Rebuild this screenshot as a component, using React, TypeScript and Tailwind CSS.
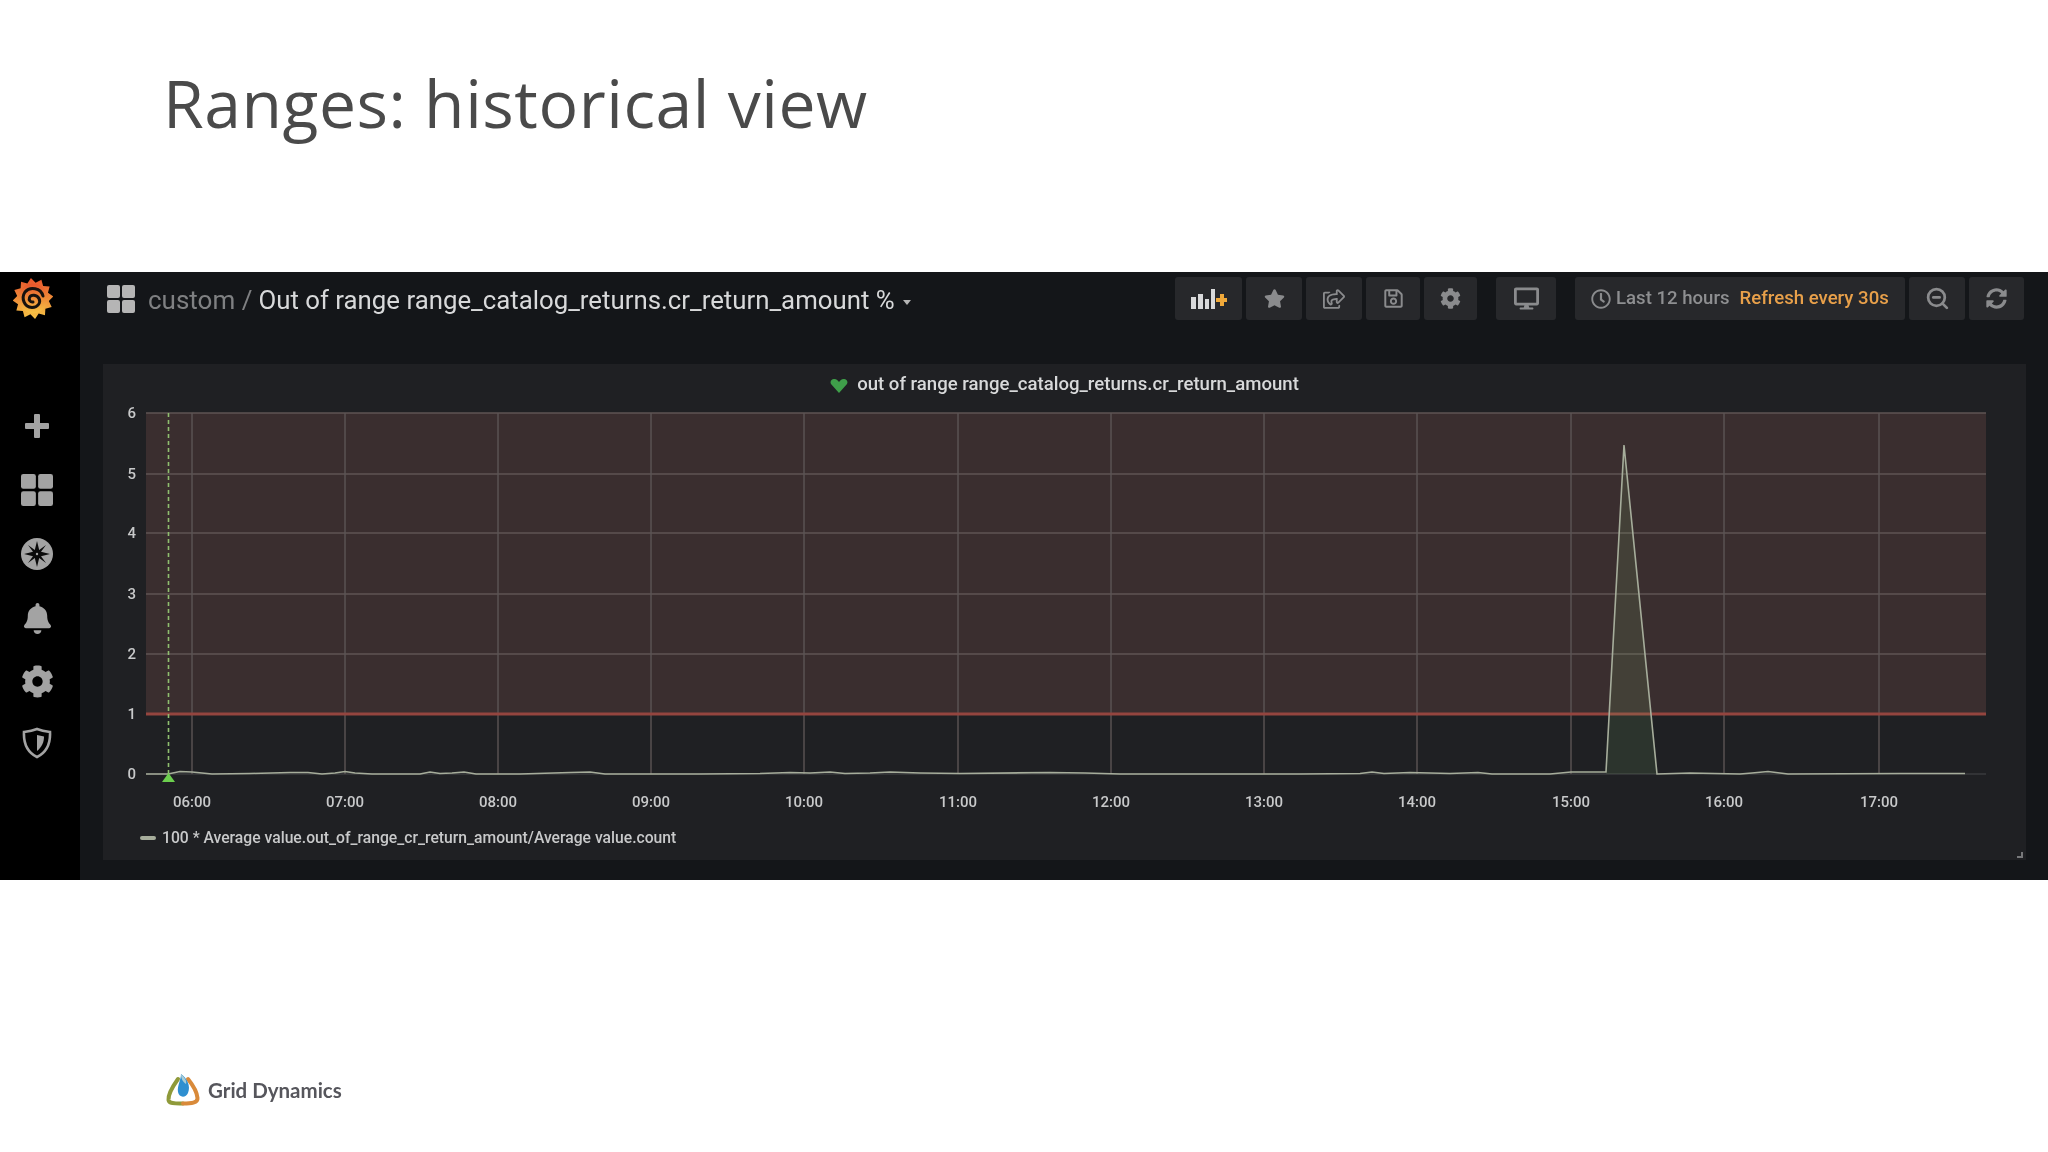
import React from 'react';
import { FaBell, FaCog, FaDesktop, FaRegClock, FaRegSave, FaStar, FaSyncAlt, FaRegShareSquare } from 'react-icons/fa';
import { ZoomOut } from 'lucide-react';

const yTicks = [
  { label: '6', y: 413 },
  { label: '5', y: 474 },
  { label: '4', y: 533 },
  { label: '3', y: 594 },
  { label: '2', y: 654 },
];

const xTicks = [
  { label: '06:00', x: 192 },
  { label: '07:00', x: 345 },
  { label: '08:00', x: 498 },
  { label: '09:00', x: 651 },
  { label: '10:00', x: 804 },
  { label: '11:00', x: 958 },
  { label: '12:00', x: 1111 },
  { label: '13:00', x: 1264 },
  { label: '14:00', x: 1417 },
  { label: '15:00', x: 1571 },
  { label: '16:00', x: 1724 },
  { label: '17:00', x: 1879 },
];

// series points, page coordinates
const series: [number, number][] = [
  [146, 774], [168, 774], [180, 771.5], [192, 772], [212, 774], [250, 773.5], [290, 772.5], [308, 772.5], [322, 774],
  [335, 773], [345, 771.5], [355, 773], [372, 774], [420, 774], [430, 772], [440, 773.5], [452, 773], [464, 772],
  [476, 774], [520, 774], [570, 772.5], [590, 772], [605, 774], [650, 774], [700, 774], [760, 773.5], [790, 772.5],
  [810, 773], [830, 772], [845, 773.5], [870, 773], [890, 772], [920, 773], [960, 773.5], [1050, 772.5], [1085, 773],
  [1120, 774], [1300, 774], [1360, 773.5], [1372, 772], [1384, 773.5], [1410, 772.5], [1430, 773], [1450, 773.5], [1478, 772.5],
  [1492, 774], [1550, 774], [1571, 772], [1606, 772], [1624, 445], [1657, 774], [1690, 773], [1740, 774], [1752, 773],
  [1768, 771.5], [1788, 774], [1900, 773.5], [1965, 773.5],
];

const spikeArea = '1606,774 1606,772 1624,445 1657,774';

const GrafanaLogo = () => {
  const spikes = Array.from({ length: 24 }, (_, i) => {
    const r = i % 2 === 0 ? 20.5 : 16;
    const a = (i * Math.PI) / 12 - 0.1;
    return `${20 + r * Math.cos(a)},${21.5 + r * Math.sin(a)}`;
  }).join(' ');
  return (
    <svg width="40" height="43" viewBox="0 0 40 43">
      <defs>
        <linearGradient id="graf" x1="0" y1="0" x2="0" y2="1">
          <stop offset="0" stopColor="#e8542c" />
          <stop offset="1" stopColor="#f6c445" />
        </linearGradient>
      </defs>
      <polygon points={spikes} fill="url(#graf)" />
      <circle cx="20" cy="21.5" r="15" fill="url(#graf)" />
      <path
        d="M30 19 C28 11 17 9 12 15 C8 21 11 30 19 30.500 C25 30.500 28 25.500 26 21.500 C24 17.500 18 17 16.500 20.500 C15.500 23 17.500 25.500 20 25"
        fill="none"
        stroke="#17120f"
        strokeWidth="3"
        strokeLinecap="round"
      />
    </svg>
  );
};

const GridIcon = ({ size, color }: { size: number; color: string }) => (
  <svg width={size} height={size} viewBox="0 0 28 28" fill={color}>
    <rect x="0" y="0" width="13" height="13" rx="2" />
    <rect x="15" y="0" width="13" height="13" rx="2" />
    <rect x="0" y="15" width="13" height="13" rx="2" />
    <rect x="15" y="15" width="13" height="13" rx="2" />
  </svg>
);

const PlusIcon = () => (
  <svg width="24" height="24" viewBox="0 0 24 24" fill="#a3a3a3">
    <rect x="9" y="0" width="6" height="24" rx="1" />
    <rect x="0" y="9" width="24" height="6" rx="1" />
  </svg>
);

const CompassIcon = () => (
  <svg width="32" height="32" viewBox="0 0 32 32">
    <circle cx="16" cy="16" r="16" fill="#a3a3a3" />
    <path d="M16 3 L18.200 12 L25 7 L20 13.800 L29 16 L20 18.200 L25 25 L18.200 20 L16 29 L13.800 20 L7 25 L12 18.200 L3 16 L12 13.800 L7 7 L13.800 12 Z" fill="#0b0b0b" />
    <circle cx="16" cy="16" r="1.2" fill="#a3a3a3" />
  </svg>
);

const ShieldIcon = () => (
  <svg width="30" height="32" viewBox="0 0 30 32">
    <path d="M15 2 C10 4 6 4.500 2 5 C1.500 15 5 25 15 30 C25 25 28.500 15 28 5 C24 4.500 20 4 15 2 Z" fill="none" stroke="#a3a3a3" strokeWidth="2.6" />
    <path d="M15 8 L22 9.500 C22 15 20 20 15 24 Z" fill="#a3a3a3" />
  </svg>
);

const AddPanelIcon = () => (
  <svg width="36" height="22" viewBox="0 0 36 22">
    <rect x="0" y="9" width="5" height="12" fill="#d8d9da" />
    <rect x="7" y="6" width="5" height="15" fill="#d8d9da" />
    <rect x="14" y="11" width="4" height="10" fill="#d8d9da" />
    <rect x="20" y="1" width="4" height="20" fill="#d8d9da" />
    <path d="M29 6 h4 v4 h3 v4 h-3 v4 h-4 v-4 h-4 v-4 h4 Z" fill="#f0a93a" />
  </svg>
);

const navBtn = 'flex h-[43px] items-center justify-center rounded-[3px] bg-[#27282b] text-[#8a8b8d]';

const Header = () => (
  <div className="flex h-[92px] items-start justify-between pl-[27px] pr-[24px] pt-[5px]">
    <div className="flex h-[43px] items-center">
      <GridIcon size={28} color="#b5b5b5" />
      <span className="ml-[13px] mt-[3px] text-[26px] text-[#7f8082]">custom /</span>
      <span className="ml-[6px] mt-[3px] text-[25.8px] text-[#d8d9da]">Out of range range_catalog_returns.cr_return_amount %</span>
      <span className="ml-[8px] mt-[7px] h-0 w-0 border-x-[4px] border-t-[5px] border-x-transparent border-t-[#b5b5b5]" />
    </div>
    <div className="flex items-start">
      <div className="flex gap-1">
        <div className={`${navBtn} w-[67px]`}><AddPanelIcon /></div>
        <div className={`${navBtn} w-[56px]`}><FaStar size={21} /></div>
        <div className={`${navBtn} w-[56px]`}><FaRegShareSquare size={22} /></div>
        <div className={`${navBtn} w-[54px]`}><FaRegSave size={21} /></div>
        <div className={`${navBtn} w-[53px]`}><FaCog size={21} /></div>
      </div>
      <div className={`${navBtn} ml-[19px] w-[60px]`}><FaDesktop size={25} /></div>
      <div className="ml-[19px] flex gap-1">
        <div className={`${navBtn} w-[330px] justify-start pl-4 text-[18.6px] font-medium`}>
          <FaRegClock size={20} />
          <span className="ml-[5px] text-[#8e8f91]">Last 12 hours</span>
          <span className="ml-[10px] text-[#e8a04a]">Refresh every 30s</span>
        </div>
        <div className={`${navBtn} w-[56px]`}><ZoomOut size={25} strokeWidth={2.6} /></div>
        <div className={`${navBtn} w-[55px]`}><FaSyncAlt size={21} /></div>
      </div>
    </div>
  </div>
);

const Chart = () => (
  <svg className="block" width="1923" height="420" viewBox="103 405 1923 420" style={{ fontFamily: 'Roboto, sans-serif' }}>
    <rect x="146" y="413" width="1840" height="301" fill="#3a2e2f" />
    {yTicks.map((t) => (
      <line key={t.label} x1="146" x2="1986" y1={t.y} y2={t.y} stroke="#5f5555" strokeWidth="1.4" />
    ))}
    <line x1="146" x2="1986" y1="774" y2="774" stroke="#46474a" />
    {xTicks.map((t) => (
      <line key={t.label} x1={t.x} x2={t.x} y1="413" y2="774" stroke="#5c5555" strokeWidth="1.4" />
    ))}
    <rect x="146" y="712.500" width="1840" height="3" fill="#94453f" />
    <polygon points={spikeArea} fill="#7eb26d" fillOpacity="0.14" />
    <polyline points={series.map((p) => p.join(',')).join(' ')} fill="none" stroke="#a6ad9b" strokeWidth="1.6" />
    <line x1="168.500" x2="168.500" y1="413" y2="776" stroke="#8fbf6f" strokeWidth="1.6" strokeDasharray="4 3" />
    <polygon points="168.500,773 175,782 162,782" fill="#6ccf4e" />
    {yTicks.map((t) => (
      <text key={t.label} x="136" y={t.y + 5} textAnchor="end" fontSize="15" fontWeight="500" fill="#c8c9ca">{t.label}</text>
    ))}
    <text x="136" y="719" textAnchor="end" fontSize="15" fontWeight="500" fill="#c8c9ca">1</text>
    <text x="136" y="779" textAnchor="end" fontSize="15" fontWeight="500" fill="#c8c9ca">0</text>
    {xTicks.map((t) => (
      <text key={t.label} x={t.x} y="807" textAnchor="middle" fontSize="15" fontWeight="500" fill="#c8c9ca">{t.label}</text>
    ))}
  </svg>
);

const Panel = () => (
  <div className="relative ml-[23px] mr-[22px] h-[496px] bg-[#1f2023]">
    <div className="flex h-[39px] items-center justify-center pt-[2px] text-[18.6px] font-medium text-[#d8d9da]">
      <svg width="18" height="16" viewBox="0 0 18 16" className="mr-[9px] mt-[3px]">
        <path d="M9 15 L1 6 C-0.500 3 2 0.500 4.500 1 C6.500 1 8 2.500 9 4 C10 2.500 11.500 1 13.500 1 C16 0.500 18.500 3 17 6 Z" fill="#3f9f4a" />
      </svg>
      out of range range_catalog_returns.cr_return_amount
    </div>
    <div className="h-[2px]" />
    <Chart />
    <div className="flex h-[25px] items-center pl-[37px] text-[15.7px] font-medium text-[#c8c9ca]">
      <span className="h-[4px] w-[16px] rounded-sm bg-[#a6ad9b]" />
      <span className="ml-[6px]">100 * Average value.out_of_range_cr_return_amount/Average value.count</span>
    </div>
    <span className="absolute bottom-[2px] right-[3px] h-[6px] w-[6px] border-b-2 border-r-2 border-[#77787a]" />
  </div>
);

const Sidebar = () => (
  <div className="flex w-20 shrink-0 flex-col items-center bg-black pr-[6px] pt-[5px]">
    <div className="mr-[8px] h-[43px]"><GrafanaLogo /></div>
    <div className="mt-[74px] flex flex-col items-center text-[#a3a3a3]">
      <div className="flex h-16 w-full items-center justify-center"><PlusIcon /></div>
      <div className="flex h-16 w-full items-center justify-center"><GridIcon size={32} color="#a3a3a3" /></div>
      <div className="flex h-16 w-full items-center justify-center"><CompassIcon /></div>
      <div className="flex h-16 w-full items-center justify-center"><FaBell size={31} /></div>
      <div className="flex h-[63px] w-full items-center justify-center"><FaCog size={33} /></div>
      <div className="-mt-[2px] flex h-16 w-full items-center justify-center"><ShieldIcon /></div>
    </div>
  </div>
);

const GridDynamicsLogo = () => (
  <svg width="36" height="36" viewBox="0 0 36 36" fill="none">
    <path d="M13 7 C8 14 3 23 3.500 28 C4 32 11 31.500 18 31.500" stroke="#8f9a3a" strokeWidth="4" strokeLinecap="round" />
    <path d="M18 31.500 C26 31.500 33 31 32.500 26 C32 20 27 12 23 7" stroke="#d98a3a" strokeWidth="4" strokeLinecap="round" />
    <path d="M16 2 C22 6 26 14 23 21 C21 26 14 26 13 20 C12 14 16 8 16 2 Z" fill="#2f8fd0" />
    <path d="M16 2 C20 6 22 9 21 12 C18 10 16 7 16 2 Z" fill="#a9cdd6" />
  </svg>
);

export default function App() {
  return (
    <div className="h-[1152px] w-[2048px] overflow-hidden bg-white" style={{ fontFamily: 'Roboto, sans-serif' }}>
      <div className="h-[272px] pl-[163px] pt-[58px]">
        <h1 className="text-[66px] font-medium leading-[88px] tracking-[0.55px] text-[#4a4a4a]" style={{ fontFamily: '"Open Sans", sans-serif' }}>
          Ranges: historical view
        </h1>
      </div>
      <div className="h-[608px] overflow-hidden bg-[#0b0b0c]">
        <div className="flex h-full blur-[0.6px]">
          <Sidebar />
          <div className="flex-1 bg-[#141619]">
            <Header />
            <Panel />
          </div>
        </div>
      </div>
      <div className="flex items-center pl-[165px] pt-[192px]">
        <GridDynamicsLogo />
        <span className="ml-[7px] text-[20.5px] font-bold text-[#56565c] blur-[0.4px]" style={{ fontFamily: 'Lato, sans-serif' }}>Grid Dynamics</span>
      </div>
    </div>
  );
}
